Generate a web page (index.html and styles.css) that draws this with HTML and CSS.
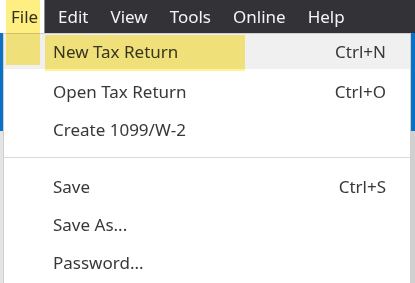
FILE: index.html
```html
<!DOCTYPE html>
<html>
<head>
<meta charset="utf-8">
<link rel="stylesheet" href="styles.css">
</head>
<body>
<div class="app">
  <nav class="menubar">
    <span class="item active">File</span>
    <span class="item">Edit</span>
    <span class="item">View</span>
    <span class="item">Tools</span>
    <span class="item">Online</span>
    <span class="item">Help</span>
  </nav>
  <div class="stage">
    <div class="edge left"></div>
    <ul class="dropdown">
      <li class="row hover"><span>New Tax Return</span><span class="key">Ctrl+N</span></li>
      <li class="row"><span>Open Tax Return</span><span class="key">Ctrl+O</span></li>
      <li class="row"><span>Create 1099/W-2</span></li>
      <li class="sep"></li>
      <li class="row"><span>Save</span><span class="key">Ctrl+S</span></li>
      <li class="row"><span>Save As...</span></li>
      <li class="row"><span>Password...</span></li>
    </ul>
    <div class="edge right"></div>
  </div>
  <div class="mark mark-file"></div>
  <div class="mark mark-new"></div>
</div>
</body>
</html>
```
FILE: styles.css
```css
* { box-sizing: border-box; }
html, body { margin: 0; padding: 0; }
body {
  width: 415px;
  height: 283px;
  overflow: hidden;
  background: #fff;
  font-family: "Noto Sans", "Open Sans", sans-serif;
}
.app { position: relative; width: 415px; height: 283px; }
.menubar {
  display: flex;
  height: 33px;
  background: #333337;
  color: #f4f4f4;
  font-size: 17px;
  align-items: stretch;
}
.item {
  display: flex;
  align-items: center;
  padding: 0 11px;
  line-height: 1;
}
.item.active {
  background: #fff;
  color: #333;
  width: 45px;
  border-right: 1px solid #8a8a8a;
  margin-right: 2px;
}
.stage {
  display: grid;
  grid-template-columns: 3px 1fr 4px;
  height: 250px;
}
.edge.left { background: linear-gradient(#0a72c6 0, #0a72c6 98px, #e4e4e4 98px); }
.edge.right { background: linear-gradient(#0a72c6 0, #0a72c6 98px, #d0d0d0 98px); }
.dropdown {
  list-style: none;
  margin: 0;
  padding: 0;
  background: #fff;
  border: 1px solid #cfcfcf;
  border-bottom: none;
  color: #383838;
  font-size: 17px;
}
.row {
  display: flex;
  justify-content: space-between;
  align-items: center;
  height: 38px;
  padding: 0 24px 0 49px;
}
.row.hover {
  background: linear-gradient(#f0f0f0, #f0f0f0) top left / 100% 35px no-repeat;
  padding-bottom: 3px;
}
.sep {
  height: 19px;
  padding: 9px 0;
}
.sep::before {
  content: "";
  display: block;
  height: 1px;
  background: #d9d9d9;
}
.mark {
  position: absolute;
  background: #ffee82;
  mix-blend-mode: multiply;
}
.mark-file { left: 6px; top: 0; width: 34px; height: 65px; }
.mark-new { left: 45px; top: 35px; width: 200px; height: 34px; box-shadow: 0 2px 0 #fff39a; }
```
